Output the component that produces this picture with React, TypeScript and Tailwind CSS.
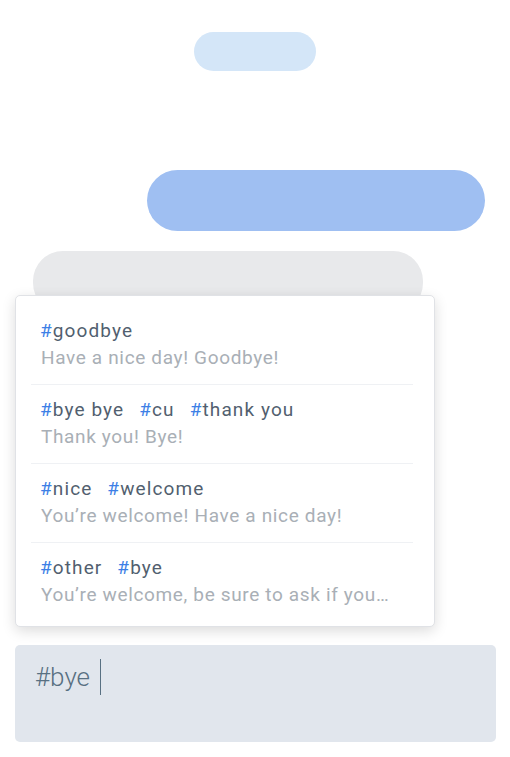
import React from 'react';

type Suggestion = {
  tags: string[];
  text: string;
};

const suggestions: Suggestion[] = [
  { tags: ['goodbye'], text: 'Have a nice day! Goodbye!' },
  { tags: ['bye bye', 'cu', 'thank you'], text: 'Thank you! Bye!' },
  { tags: ['nice', 'welcome'], text: 'You’re welcome! Have a nice day!' },
  { tags: ['other', 'bye'], text: 'You’re welcome, be sure to ask if you…' },
];

function SuggestionRow({ item, last }: { item: Suggestion; last: boolean }) {
  return (
    <div className={`ml-[15px] mr-[21px] pl-[9px] pt-[12px] h-[79px] ${last ? '' : 'border-b border-[#eff1f4]'}`}>
      <div className="flex gap-[15px] text-[19px] leading-[26px] tracking-[1.1px] text-[#525f6f]">
        {item.tags.map((t) => (
          <span key={t}>
            <span className="text-[#3d7fe6]">#</span>
            {t}
          </span>
        ))}
      </div>
      <p className="pl-[1px] text-[19px] leading-[26px] tracking-[0.65px] text-[#a9afb6] mt-[1px] whitespace-nowrap">
        {item.text}
      </p>
    </div>
  );
}

export default function App() {
  return (
    <div className="relative w-full h-[757px] bg-white overflow-hidden" style={{ fontFamily: 'Roboto, "Noto Sans", sans-serif' }}>
      {/* Chat bubbles (placeholders) */}
      <div className="pt-[32px] flex flex-col">
        <div className="ml-[194px] w-[122px] h-[39px] rounded-full bg-[#d4e6f8]" />
        <div className="mt-[99px] ml-[147px] w-[338px] h-[61px] rounded-full bg-[#9fbff2]" />
        <div className="mt-[20px] ml-[33px] w-[390px] h-[62px] rounded-[30px] bg-[#e8e9eb]" />
      </div>

      {/* Hashtag suggestion popup */}
      <div className="absolute left-[15px] top-[295px] w-[420px] h-[332px] bg-white rounded-[5px] border border-[#e0e2e6] shadow-[0_4px_14px_rgba(0,0,0,0.14)] pt-[10px]">
        {suggestions.map((s, i) => (
          <SuggestionRow key={i} item={s} last={i === suggestions.length - 1} />
        ))}
      </div>

      {/* Input */}
      <div className="absolute left-[15px] top-[645px] w-[481px] h-[97px] rounded-[5px] bg-[#e1e6ed] px-[20px] pt-[14px]">
        <div className="flex items-center h-[36px]">
          <span className="text-[26px] font-light text-[#587082]">#bye</span>
          <span className="ml-[10px] w-[1px] h-[36px] bg-[#587082]" />
        </div>
      </div>
    </div>
  );
}
